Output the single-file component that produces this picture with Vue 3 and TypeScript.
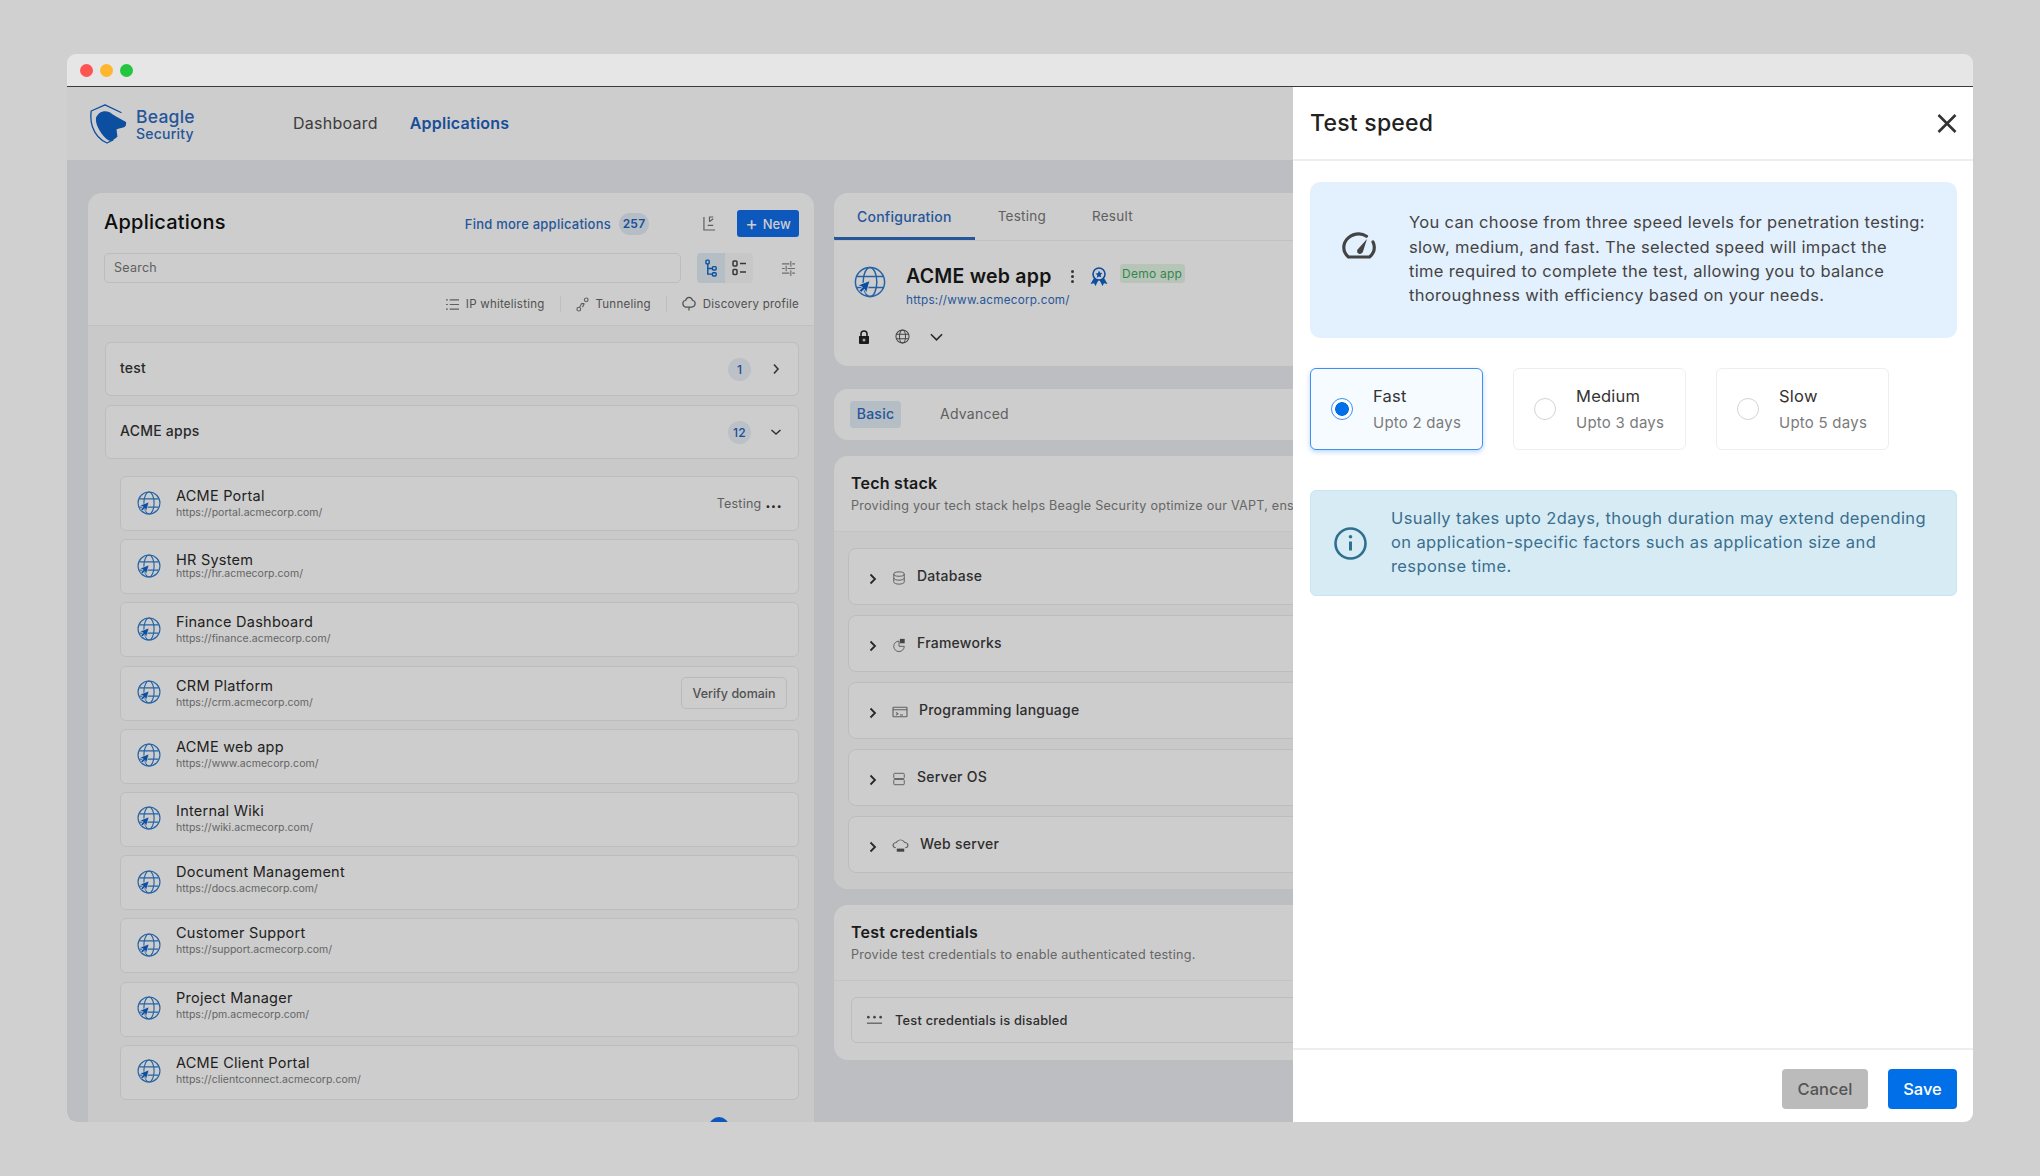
<template>
  <div class="page">
    <svg class="defs" aria-hidden="true">
      <symbol id="globe" viewBox="0 0 32 32">
        <g fill="none" stroke="currentColor" stroke-width="1.5">
          <circle cx="16" cy="16" r="14.6" />
          <ellipse cx="16" cy="16" rx="6.8" ry="14.6" />
          <path d="M3 10.5h26M3 21.5h26" />
        </g>
        <path d="M16 14.500 3.800 19.300l4.600 1.900-3.200 3.200 2 2 3.200-3.200 1.900 4.300z" fill="#0f62c8" stroke="#fff" stroke-width=".9" />
      </symbol>
    </svg>

    <div class="window">
      <div class="titlebar">
        <span class="dot red"></span>
        <span class="dot yellow"></span>
        <span class="dot green"></span>
      </div>

      <div class="stage">
        <header class="topbar">
          <div class="logo">
            <svg class="logo-mark" viewBox="0 0 37 40">
              <path d="M15 .8 31 8.500M15 .8 1.200 7C.5 13 1 19 2.500 23 5 30 10 36 17 39l6-3" fill="none" stroke="#0f62c8" stroke-width="1.300" stroke-linejoin="round" stroke-linecap="round" />
              <path d="M6 13.500c2-3.500 3.500-5.500 7-6 4-.5 7 .5 9 2.500l5 3 9 5c.5 2-.5 5-1.500 5-3 1-6 1.500-8 2.500.5 3 .5 5 1 7-2 2-4.500 4-7.500 4.500-4.500-2-8-6-11-11.500C6.500 21 5.500 17 6 13.500z" fill="#0f62c8" />
            </svg>
            <div class="logo-text">
              <span class="logo-top">Beagle</span>
              <span class="logo-bottom">Security</span>
            </div>
          </div>
          <nav class="nav">
            <a class="nav-link">Dashboard</a>
            <a class="nav-link active">Applications</a>
          </nav>
        </header>

        <div class="content">
          <section class="panel apps">
            <div class="apps-head">
              <div class="apps-row">
                <h1>Applications</h1>
                <a class="find-more">Find more applications</a>
                <span class="count">257</span>
                <svg class="export" viewBox="0 0 14 18" fill="none" stroke="#777" stroke-width="1.3">
                  <path d="M1 2v14h12M11 2H7v5M7 7l4-3M5 11h6" />
                </svg>
                <button class="new-btn"><span class="plus">+</span>New</button>
              </div>
              <div class="search-row">
                <div class="search">Search</div>
                <div class="toggle">
                  <span class="toggle-part on">
                    <svg viewBox="0 0 14 20" width="13" height="19" fill="none" stroke="#0f62c8" stroke-width="1.5">
                      <rect x="1" y="1" width="3.5" height="4" rx="1" />
                      <rect x="8" y="8" width="4" height="3.6" rx="1" />
                      <rect x="8" y="14.5" width="4" height="3.6" rx="1" />
                      <path d="M3 5v11h5M3 10h5" />
                    </svg>
                  </span>
                  <span class="toggle-part">
                    <svg viewBox="0 0 14 16" width="14" height="16" fill="none" stroke="#444" stroke-width="1.5">
                      <rect x="1" y="1" width="4" height="5" rx="1" />
                      <rect x="1" y="9.5" width="4" height="5" rx="1" />
                      <path d="M8 3.5h6M8 12h6" />
                    </svg>
                  </span>
                </div>
                <svg class="sliders" viewBox="0 0 14 18" fill="none" stroke="#888" stroke-width="1.2">
                  <path d="M0 4h8M11 4h3M9.5 1v6M0 9h3M6 9h8M4.500 6v6M0 14h8M11 14h3M9.500 11v6" />
                </svg>
              </div>
              <div class="tools-row">
                <span class="tool">
                  <svg viewBox="0 0 14 14" width="13" height="13" fill="none" stroke="#777" stroke-width="1.2">
                    <path d="M0 2h2M4 2h10M0 7h2M4 7h10M0 12h2M4 12h10" />
                  </svg>
                  IP whitelisting
                </span>
                <span class="tool-sep"></span>
                <span class="tool">
                  <svg viewBox="0 0 14 16" width="13" height="15" fill="none" stroke="#777" stroke-width="1.2">
                    <circle cx="3" cy="13" r="2" />
                    <circle cx="11" cy="3" r="2" />
                    <path d="M4 11 6 7h3M7 11l2-4" />
                  </svg>
                  Tunneling
                </span>
                <span class="tool-sep"></span>
                <span class="tool">
                  <svg viewBox="0 0 16 18" width="14" height="16" fill="none" stroke="#666" stroke-width="1.4">
                    <path d="M4 12.500C1.500 12 1 10 1 8.500 1 6.500 2.500 5 4 5 5 2.500 6.500 1.500 8 1.500s3.500 1 4 3.500c2 0 3 1.500 3 3.500 0 2-1 3.500-3.500 4H4zM8 12.500v4" />
                  </svg>
                  Discovery profile
                </span>
              </div>
            </div>

            <div class="apps-list">
              <div class="group group-test">
                <span class="group-name">test</span>
                <span class="group-count">1</span>
                <svg class="group-chev" viewBox="0 0 8 12" fill="none" stroke="#444" stroke-width="1.6">
                  <path d="m2 1.500 4 4.500-4 4.500" />
                </svg>
              </div>
              <div class="group">
                <span class="group-name">ACME apps</span>
                <span class="group-count">12</span>
                <svg class="group-chev" viewBox="0 0 12 8" fill="none" stroke="#444" stroke-width="1.600">
                  <path d="m1.500 2 4.500 4 4.500-4" />
                </svg>
              </div>

              <div class="items">
                <div v-for="app in apps" :key="app.url" class="item">
                  <svg class="item-globe"><use href="#globe" /></svg>
                  <div class="item-text" :style="{ marginTop: (app.dy * 2 - 3) + 'px' }">
                    <div class="item-title">{{ app.name }}</div>
                    <div class="item-url" :class="{ tight: app.tight }">{{ app.url }}</div>
                  </div>
                  <div v-if="app.testing" class="item-status">
                    Testing <span class="dots">...</span>
                  </div>
                  <button v-if="app.verify" class="verify">Verify domain</button>
                </div>
              </div>
              <div class="pager"><span class="pager-dot"></span></div>
            </div>
          </section>

          <div class="right">
            <section class="panel summary">
              <div class="tabs">
                <span class="tab active">Configuration</span>
                <span class="tab">Testing</span>
                <span class="tab">Result</span>
              </div>
              <div class="app-head">
                <svg class="app-globe"><use href="#globe" /></svg>
                <div>
                  <div class="app-title-row">
                    <span class="app-title">ACME web app</span>
                    <span class="kebab">
                      <i></i><i></i><i></i>
                    </span>
                    <svg class="ribbon" viewBox="0 0 18 19">
                      <circle cx="9" cy="7" r="6" fill="none" stroke="#0f62c8" stroke-width="1.6" />
                      <path d="m9 3.500 1.100 2.300 2.400.3-1.800 1.700.5 2.400L9 9.500l-2.200 1.200.5-2.400-1.800-1.700 2.400-.3zM4 11l-3.500 6 3.500-.8 1.500 2.800 3-6zM14 11l3.500 6-3.500-.8-1.500 2.800-3-6z" fill="#0f62c8" />
                    </svg>
                    <span class="demo">Demo app</span>
                  </div>
                  <a class="app-url">https://www.acmecorp.com/</a>
                </div>
              </div>
              <div class="app-icons">
                <svg class="lock" viewBox="0 0 12 14" width="12" height="14">
                  <path d="M3 6V4a3 3 0 0 1 6 0v2" fill="none" stroke="#222" stroke-width="1.500" />
                  <path d="M1 6h10a1 1 0 0 1 0 0v7a1 1 0 0 1-1 1H2a1 1 0 0 1-1-1z" fill="#222" />
                  <circle cx="6" cy="10" r="1.500" fill="#ccc" />
                </svg>
                <svg viewBox="0 0 16 16" width="15" height="15" fill="none" stroke="#555" stroke-width="1.100">
                  <circle cx="8" cy="8" r="7" />
                  <ellipse cx="8" cy="8" rx="3.200" ry="7" />
                  <path d="M1.500 5.500h13M1.500 10.500h13" />
                </svg>
                <svg viewBox="0 0 14 8" width="13" height="8" fill="none" stroke="#333" stroke-width="1.700">
                  <path d="m1 1 6 6 6-6" />
                </svg>
              </div>
            </section>

            <section class="panel subtabs">
              <span class="subtab active">Basic</span>
              <span class="subtab">Advanced</span>
            </section>

            <section class="panel">
              <div class="section-head">
                <h2>Tech stack</h2>
                <p>Providing your tech stack helps Beagle Security optimize our VAPT, ensuring</p>
              </div>
              <div class="stack-list">
                <div v-for="row in stack" :key="row.name" class="stack-row">
                  <svg class="stack-chev" viewBox="0 0 8 12" fill="none" stroke="#333" stroke-width="1.800">
                    <path d="m1.500 1.500 4.500 4.500-4.500 4.500" />
                  </svg>
                  <svg class="stack-icon" :style="{ width: row.width + 'px' }" viewBox="0 0 16 16" preserveAspectRatio="none" fill="none" stroke="#777" stroke-width="1.100" v-html="row.icon"></svg>
                  <span class="stack-name">{{ row.name }}</span>
                </div>
              </div>
            </section>

            <section class="panel">
              <div class="section-head">
                <h2>Test credentials</h2>
                <p>Provide test credentials to enable authenticated testing.</p>
              </div>
              <div class="cred-wrap">
                <div class="cred-box">
                  <svg viewBox="0 0 18 10" width="17" height="10" fill="#555">
                    <circle cx="2.500" cy="2" r="1.400" />
                    <circle cx="9" cy="2" r="1.400" />
                    <circle cx="15.500" cy="2" r="1.400" />
                    <rect x="1" y="7.800" width="16" height="1.100" />
                  </svg>
                  <span>Test credentials is disabled</span>
                </div>
              </div>
            </section>
          </div>
        </div>

        <div class="overlay"></div>

        <aside class="drawer">
          <div class="drawer-head">
            <h3>Test speed</h3>
            <svg class="close" viewBox="0 0 20 19" fill="none" stroke="#333" stroke-width="2.600">
              <path d="m1.500 1 17 17M18.500 1l-17 17" />
            </svg>
          </div>

          <div class="drawer-body">
            <div class="intro">
              <svg class="gauge" viewBox="0 0 34 27" fill="none" stroke="#444" stroke-width="3.200">
                <path d="M6.500 25H27.500C30.500 22.500 32.300 19.300 32.300 15.500 32.300 13.500 31.800 11.500 31 10M24.500 4.200C22.300 2.700 19.700 1.800 17 1.800 8.700 1.800 1.800 8 1.800 15.500 1.800 19.300 3.500 22.500 6.500 25" stroke-linecap="round" stroke-linejoin="round" />
                <path d="M25 7 21 19.500c-.7 2-2.600 2.900-4.200 2.200-1.700-.8-2.300-2.700-1.200-4.300z" fill="#444" stroke="none" />
              </svg>
              <p>You can choose from three speed levels for penetration testing:<br>slow, medium, and fast. The selected speed will impact the<br>time required to complete the test, allowing you to balance<br>thoroughness with efficiency based on your needs.</p>
            </div>

            <div class="speeds">
              <div v-for="s in speeds" :key="s.name" class="speed" :class="{ picked: s.name === picked }">
                <span class="radio"></span>
                <div>
                  <div class="speed-name">{{ s.name }}</div>
                  <div class="speed-time">{{ s.time }}</div>
                </div>
              </div>
            </div>

            <div class="notice">
              <svg class="notice-icon" viewBox="0 0 33 33" fill="none" stroke="#2f6f90" stroke-width="2.600">
                <circle cx="16.500" cy="16.500" r="15" />
                <path d="M16.500 14.500v9" stroke-width="3" />
                <circle cx="16.500" cy="9.800" r="1.800" fill="#2f6f90" stroke="none" />
              </svg>
              <p>Usually takes upto 2days, though duration may extend depending<br>on application-specific factors such as application size and<br>response time.</p>
            </div>
          </div>

          <div class="drawer-foot">
            <button class="btn cancel">Cancel</button>
            <button class="btn save">Save</button>
          </div>
        </aside>
      </div>
    </div>
  </div>
</template>

<script setup lang="ts">
import { ref } from 'vue'

type App = { name: string, url: string, dy: number, tight?: boolean, testing?: boolean, verify?: boolean }
type StackRow = { name: string, icon: string, width: number }

const apps: App[] = [
  { name: 'ACME Portal', url: 'https://portal.acmecorp.com/', dy: 1.5, testing: true },
  { name: 'HR System', url: 'https://hr.acmecorp.com/', dy: 1.7, tight: true },
  { name: 'Finance Dashboard', url: 'https://finance.acmecorp.com/', dy: 1.3 },
  { name: 'CRM Platform', url: 'https://crm.acmecorp.com/', dy: 2.2, verify: true },
  { name: 'ACME web app', url: 'https://www.acmecorp.com/', dy: 0.5 },
  { name: 'Internal Wiki', url: 'https://wiki.acmecorp.com/', dy: 1.5 },
  { name: 'Document Management', url: 'https://docs.acmecorp.com/', dy: -1 },
  { name: 'Customer Support', url: 'https://support.acmecorp.com/', dy: -3.3 },
  { name: 'Project Manager', url: 'https://pm.acmecorp.com/', dy: -1.2 },
  { name: 'ACME Client Portal', url: 'https://clientconnect.acmecorp.com/', dy: 0 },
]

const stack: StackRow[] = [
  { name: 'Database', width: 14, icon: '<ellipse cx="8" cy="3.500" rx="6" ry="2.500"/><path d="M2 3.500v9c0 1.400 2.700 2.500 6 2.500s6-1.100 6-2.500v-9M2 8c0 1.400 2.700 2.500 6 2.500s6-1.100 6-2.500"/>' },
  { name: 'Frameworks', width: 14, icon: '<path d="M8 3.500a6 6 0 1 0 6 6H8z"/><rect x="9" y="1" width="5.500" height="5" fill="#555" stroke="none"/>' },
  { name: 'Programming language', width: 16, icon: '<rect x="1" y="2.500" width="14" height="11" rx="1"/><path d="M1 5.500h14M4 8.500l2 1.500-2 1.500M8 11.500h3"/>' },
  { name: 'Server OS', width: 14, icon: '<rect x="2" y="1.500" width="12" height="6" rx="1"/><rect x="2" y="8.500" width="12" height="6" rx="1"/>' },
  { name: 'Web server', width: 17, icon: '<path d="M3.500 10C1.500 9.500 1 8 1 7c0-1.500 1.500-3 3-3 1-2 2.500-3 4-3s3 1 4 3c1.500 0 3 1.500 3 3 0 1-.5 2.500-2.500 3"/><rect x="4.500" y="11" width="7" height="3.500" fill="#555" stroke="none"/>' },
]

const speeds = [
  { name: 'Fast', time: 'Upto 2 days' },
  { name: 'Medium', time: 'Upto 3 days' },
  { name: 'Slow', time: 'Upto 5 days' },
]
const picked = ref('Fast')
</script>

<style>
html, body {
  margin: 0;
  background: #d0d0d0;
}
</style>

<style scoped>
.page {
  height: 1176px;
  padding-top: 54px;
  box-sizing: border-box;
  overflow: hidden;
  font-family: Inter, "Liberation Sans", sans-serif;
  letter-spacing: .015em;
  color: #222;
}
.defs {
  position: absolute;
  width: 0;
  height: 0;
}
.window {
  width: 1906px;
  height: 1068px;
  margin-left: 67px;
  border-radius: 9px;
  overflow: hidden;
  display: flex;
  flex-direction: column;
}
.titlebar {
  flex: none;
  height: 32px;
  padding-left: 13px;
  display: flex;
  align-items: center;
  gap: 7px;
  background: #e6e6e6;
  border-bottom: 1.5px solid #3a3a3a;
}
.dot {
  width: 13px;
  height: 13px;
  border-radius: 50%;
}
.red { background: #ff5452; }
.yellow { background: #ffb62e; }
.green { background: #25c63f; }

.stage {
  flex: 1;
  min-height: 0;
  position: relative;
  overflow: hidden;
  background: #ebedf2;
}
.topbar {
  height: 73px;
  display: flex;
  align-items: center;
  padding-left: 23px;
  background: #fff;
}
.logo {
  display: flex;
  align-items: center;
  gap: 9px;
  width: 203px;
}
.logo-mark {
  width: 37px;
  height: 40px;
}
.logo-text {
  display: flex;
  flex-direction: column;
  padding-top: 2px;
  color: #2f6cc0;
  font-weight: 500;
}
.logo-top { font-size: 17.500px; line-height: 18px; }
.logo-bottom { font-size: 14px; line-height: 16px; }
.nav {
  display: flex;
  gap: 32px;
  margin-bottom: 2px;
}
.nav-link {
  font-size: 16px;
  color: #4c4c4c;
}
.nav-link.active {
  color: #1e62bd;
  font-weight: 600;
}

.content {
  display: grid;
  grid-template-columns: 726px 1fr;
  column-gap: 20px;
  padding: 33px 20px 0 21px;
  height: 1000px;
  box-sizing: border-box;
}
.panel {
  background: #fff;
  border-radius: 14px;
}
.apps {
  border-bottom-left-radius: 0;
  border-bottom-right-radius: 0;
}
.apps-head {
  padding: 16px 15px 13px 16px;
  border-bottom: 1px solid #f1f1f1;
}
.apps-row {
  display: flex;
  align-items: center;
  height: 27px;
  padding-top: 1px;
}
h1 {
  margin: 0 auto 3px 0;
  font-size: 20px;
  font-weight: 500;
  color: #111;
}
.find-more {
  font-size: 13px;
  font-weight: 500;
  color: #2f6cc0;
}
.count {
  width: 30px;
  height: 22px;
  margin-left: 8px;
  border-radius: 11px;
  background: #e2ebf6;
  color: #1e62bd;
  font-size: 12px;
  font-weight: 600;
  display: flex;
  align-items: center;
  justify-content: center;
}
.export {
  width: 13px;
  height: 17px;
  margin: 0 21px 0 54px;
}
.new-btn {
  width: 62px;
  height: 27px;
  border: 0;
  border-radius: 3px;
  background: #0f6eeb;
  color: #fff;
  font: 500 13px Inter, sans-serif;
  display: flex;
  align-items: center;
  justify-content: center;
  gap: 5px;
  padding: 0;
}
.plus {
  font-size: 19px;
  line-height: 19px;
  font-weight: 400;
}
.search-row {
  display: flex;
  align-items: center;
  height: 30px;
  margin-top: 16px;
}
.search {
  width: 577px;
  height: 30px;
  box-sizing: border-box;
  border: 1.500px solid #ebebeb;
  border-radius: 5px;
  padding-left: 9px;
  font-size: 12.500px;
  line-height: 27px;
  color: #777;
}
.toggle {
  width: 56px;
  height: 30px;
  margin-left: 16px;
  display: flex;
  border-radius: 4px;
  background: #f8f8f8;
  overflow: hidden;
}
.toggle-part {
  flex: 1;
  display: flex;
  align-items: center;
  justify-content: center;
}
.toggle-part.on {
  background: #e2ebf6;
}
.sliders {
  width: 13px;
  height: 17px;
  margin-left: 29px;
}
.tools-row {
  display: flex;
  align-items: center;
  justify-content: flex-end;
  height: 16px;
  margin-top: 13px;
  font-size: 11.500px;
  color: #666;
}
.tool {
  display: flex;
  align-items: center;
  gap: 7px;
}
.tool-sep {
  width: 1px;
  height: 16px;
  margin: 0 15px;
  background: #eee;
}

.apps-list {
  padding: 16px 15px 0 17px;
  background: #fbfbfb;
}
.group {
  height: 54px;
  box-sizing: border-box;
  padding: 0 16px 0 14px;
  display: flex;
  align-items: center;
  background: #fff;
  border: 1.500px solid #ececec;
  border-radius: 6px;
}
.group-test {
  margin-bottom: 9px;
}
.group-name {
  font-size: 14px;
  font-weight: 500;
  color: #333;
  margin: 0 auto 3px 0;
}
.group-count {
  width: 23px;
  height: 23px;
  border-radius: 50%;
  background: #eaf0f8;
  color: #1e62bd;
  font-size: 12px;
  font-weight: 500;
  display: flex;
  align-items: center;
  justify-content: center;
  margin-right: 19px;
}
.group-chev {
  width: 12px;
  height: 12px;
}
.items {
  margin: 17px 0 0 15px;
  display: flex;
  flex-direction: column;
  gap: 8.200px;
}
.item {
  height: 55px;
  box-sizing: border-box;
  padding: 0 11px 0 16px;
  display: flex;
  align-items: center;
  background: #fff;
  border: 1.500px solid #ececec;
  border-radius: 6px;
}
.item-globe {
  width: 24px;
  height: 24px;
  margin: 0 15px 2px 0;
  color: #2f7ccf;
}
.item-text {
  margin-right: auto;
}
.item-title {
  font-size: 14.500px;
  line-height: 17px;
  color: #2a2a2a;
}
.item-url {
  font-size: 10.500px;
  letter-spacing: .03px;
  line-height: 17px;
  color: #7d7d7d;
}
.item-url.tight {
  margin-top: -3px;
}
.item-status {
  font-size: 12.500px;
  color: #777;
  padding: 0 5px 3px 0;
}
.dots {
  color: #333;
  font-weight: 700;
  font-size: 16px;
}
.verify {
  height: 32px;
  width: 106px;
  padding: 0;
  background: #fff;
  border: 1.500px solid #e8e8e8;
  border-radius: 5px;
  font: 500 12.500px Inter, sans-serif;
  color: #666;
}
.pager {
  padding: 17.500px 0 0 604px;
  height: 30px;
}
.pager-dot {
  display: block;
  width: 20px;
  height: 20px;
  border-radius: 50%;
  background: #0f6eeb;
}

.right {
  display: flex;
  flex-direction: column;
  gap: 16px;
  min-width: 0;
}
.summary {
  height: 173px;
  margin-bottom: 7px;
}
.tabs {
  display: flex;
  height: 47px;
  border-bottom: 1.500px solid #f1f1f1;
}
.tab {
  padding: 0 23px;
  font-size: 13.500px;
  line-height: 47px;
  color: #777;
}
.tab.active {
  font-size: 14px;
  font-weight: 500;
  color: #2f6cc0;
  box-shadow: inset 0 -3px 0 #2f6cc0;
  border-bottom-left-radius: 1px;
}
.app-head {
  display: flex;
  align-items: flex-start;
  padding: 23px 0 0 20px;
}
.app-globe {
  width: 32px;
  height: 32px;
  margin: 2px 20px 0 0;
  color: #2f7ccf;
}
.app-title-row {
  display: flex;
  align-items: center;
  height: 24px;
}
.app-title {
  font-size: 19.500px;
  font-weight: 600;
  color: #1a1a1a;
}
.kebab {
  display: flex;
  flex-direction: column;
  gap: 2px;
  margin: 0 16px 0 19px;
}
.kebab i {
  display: block;
  width: 3px;
  height: 3px;
  border-radius: 50%;
  background: #444;
}
.ribbon {
  width: 18px;
  height: 19px;
  margin-right: 12px;
}
.demo {
  height: 19px;
  width: 65px;
  text-align: center;
  margin-top: -6px;
  border-radius: 3px;
  background: #e4f5e6;
  color: #3da85f;
  font-size: 12px;
  line-height: 19px;
}
.app-url {
  display: block;
  margin-top: 4px;
  font-size: 11.700px;
  line-height: 16px;
  color: #2f6cc0;
}
.app-icons {
  display: flex;
  align-items: center;
  gap: 20px;
  padding: 21px 0 0 24px;
}
.lock {
  margin-right: 5px;
}

.subtabs {
  height: 51px;
  box-sizing: border-box;
  padding: 12px 16px;
  display: flex;
  gap: 39px;
  border-radius: 14px;
}
.subtab {
  height: 27px;
  line-height: 25px;
  font-size: 14px;
  color: #777;
}
.subtab.active {
  width: 51px;
  text-align: center;
  border-radius: 4px;
  background: #e2ebf6;
  color: #2f6cc0;
  font-weight: 500;
}
.section-head {
  padding: 17px 17px 16px;
  border-bottom: 1.500px solid #f3f3f3;
  overflow: hidden;
}
h2 {
  margin: 0;
  font-size: 16px;
  font-weight: 600;
  line-height: 20px;
  color: #222;
}
.section-head p {
  margin: 4px 0 0;
  font-size: 12.600px;
  line-height: 18px;
  color: #808080;
  white-space: nowrap;
}
.stack-list {
  padding: 16px 14px;
  display: flex;
  flex-direction: column;
  gap: 10px;
  background: #fbfbfb;
  border-radius: 0 0 14px 14px;
}
.stack-row {
  height: 57px;
  box-sizing: border-box;
  padding-left: 20px;
  display: flex;
  align-items: center;
  background: #fff;
  border: 1.500px solid #ececec;
  border-radius: 8px;
}
.stack-chev {
  width: 8px;
  height: 12px;
  margin-top: 4px;
  margin-right: 15px;
}
.stack-icon {
  height: 14px;
  margin-top: 2px;
}
.stack-name {
  margin: -3px 0 0 11px;
  font-size: 14px;
  font-weight: 500;
  color: #3a3a3a;
}
.cred-wrap {
  padding: 16px 17px 17px;
}
.cred-box {
  height: 46px;
  box-sizing: border-box;
  padding-left: 14px;
  display: flex;
  align-items: center;
  gap: 12px;
  border: 1.500px solid #ececec;
  border-radius: 6px;
  font-size: 12.800px;
  font-weight: 500;
  color: #3a3a3a;
}

.overlay {
  position: absolute;
  inset: 0;
  background: rgba(0, 0, 0, .195);
  backdrop-filter: blur(.6px);
}
.drawer {
  position: absolute;
  top: 0;
  right: 0;
  bottom: 0;
  width: 680px;
  display: flex;
  flex-direction: column;
  background: #fff;
}
.drawer-head {
  flex: none;
  height: 74px;
  box-sizing: border-box;
  padding: 0 16px 0 17px;
  display: flex;
  align-items: center;
  justify-content: space-between;
  border-bottom: 2px solid #eee;
}
h3 {
  margin: 0;
  font-size: 23px;
  font-weight: 500;
  color: #222;
}
.close {
  width: 20px;
  height: 19px;
}
.drawer-body {
  flex: 1;
  padding: 21px 16px 0 17px;
}
.intro {
  height: 156px;
  box-sizing: border-box;
  padding: 0 20px 0 32px;
  display: flex;
  align-items: center;
  gap: 33px;
  background: #e3f0fd;
  border-radius: 10px;
}
.gauge {
  flex: none;
  width: 34px;
  height: 27px;
  margin-bottom: 30px;
}
.intro p, .notice p {
  margin: 0 0 2px;
  font-size: 16.500px;
  line-height: 24.300px;
}
.intro p {
  color: #444;
  letter-spacing: .33px;
}
.speeds {
  display: flex;
  gap: 30px;
  margin-top: 30px;
}
.speed {
  width: 173px;
  height: 82px;
  box-sizing: border-box;
  padding-left: 20px;
  display: flex;
  align-items: center;
  gap: 20px;
  border: 1.500px solid #eee;
  border-radius: 6px;
}
.speed.picked {
  background: #f6fbff;
  border-color: #3f8ff0;
  box-shadow: 0 2px 5px rgba(30, 120, 230, .3);
}
.radio {
  flex: none;
  width: 22px;
  height: 22px;
  box-sizing: border-box;
  border: 1.500px solid #d4d4d4;
  border-radius: 50%;
  background: #fff;
}
.picked .radio {
  border-color: #3f8ff0;
  background: radial-gradient(circle, #006fe8 0 6.500px, #fff 7.200px);
}
.speed-name {
  font-size: 16.500px;
  line-height: 27px;
  color: #333;
}
.speed-time {
  font-size: 15px;
  line-height: 26px;
  color: #7b7b7b;
}
.notice {
  height: 106px;
  box-sizing: border-box;
  margin-top: 40px;
  padding: 0 10px 0 23px;
  display: flex;
  align-items: center;
  gap: 24px;
  background: #d7ebf5;
  border: 1px solid #c6e6f3;
  border-radius: 6px;
}
.notice-icon {
  flex: none;
  width: 33px;
  height: 33px;
}
.notice p {
  color: #3a6f8d;
  letter-spacing: .38px;
}
.drawer-foot {
  flex: none;
  height: 74px;
  box-sizing: border-box;
  padding: 0 16px 13px;
  display: flex;
  align-items: flex-end;
  justify-content: flex-end;
  gap: 20px;
  border-top: 2px solid #eee;
}
.btn {
  height: 40px;
  padding: 0;
  border: 0;
  border-radius: 4px;
  font: 500 16.500px Inter, sans-serif;
}
.cancel {
  width: 86px;
  background: #bbb;
  color: #555;
}
.save {
  width: 69px;
  background: #006fe8;
  color: #fff;
}
</style>
